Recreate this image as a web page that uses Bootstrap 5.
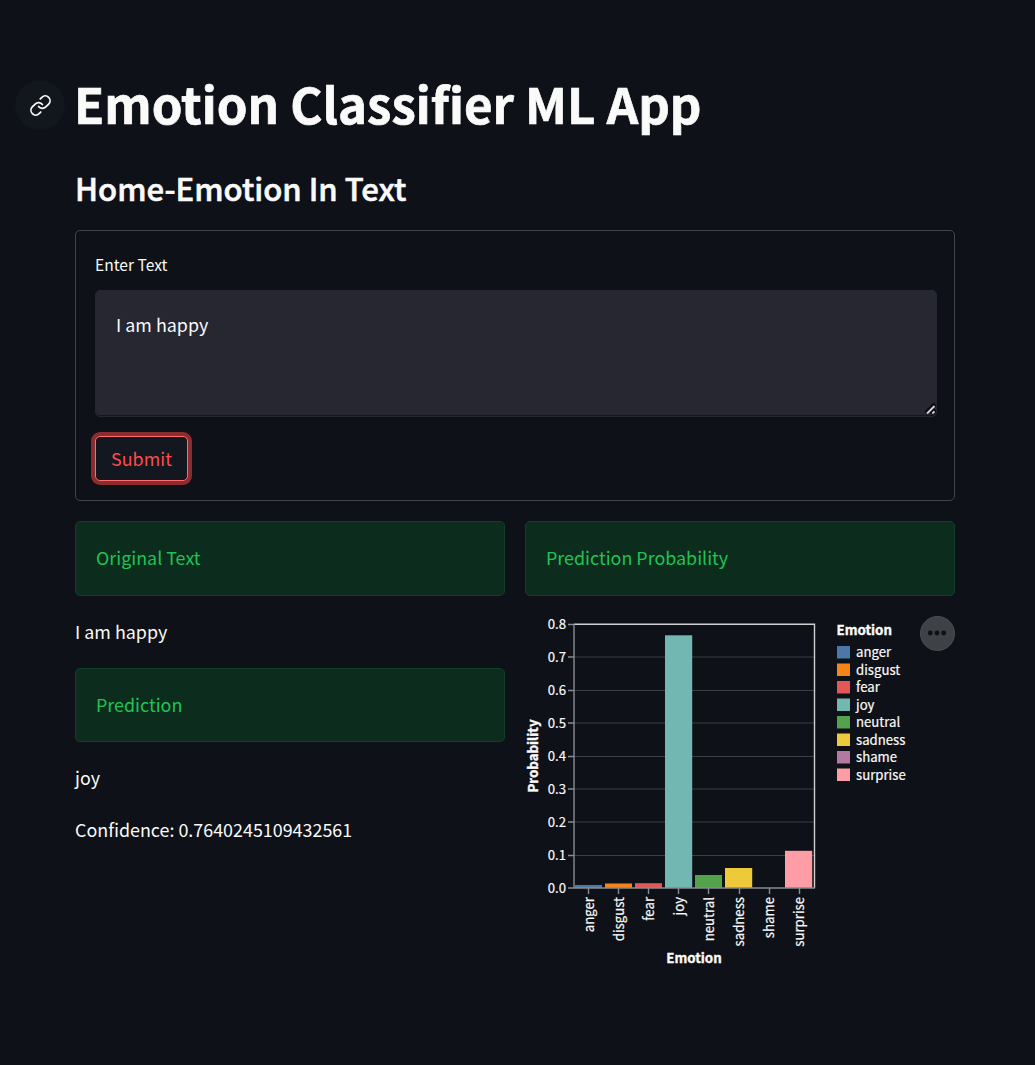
<!DOCTYPE html>
<html lang="en">
<head>
<meta charset="utf-8">
<meta name="viewport" content="width=device-width, initial-scale=1">
<title>Emotion Classifier ML App</title>
<link href="https://cdn.jsdelivr.net/npm/bootstrap@5.3.0/dist/css/bootstrap.min.css" rel="stylesheet">
<style>
  body { background: #0e1117; color: #fafafa; font-family: "Noto Sans CJK SC", "Noto Sans", sans-serif; font-size: 17.9px; line-height: 32px; height: 1065px; overflow: hidden; }
  .page { width: 880px; margin-left: 75px; padding-top: 72px; }
  .app-title { font-size: 49.2px; line-height: 66px; font-weight: 700; margin-left: -60px; gap: 9px; -webkit-text-stroke: .7px #fafafa; }
  .app-title span { margin-top: -4px; padding-bottom: 0; }
  .title-line { height: 66px; }
  .anchor-link { width: 50px; height: 50px; background: #12161d; }
  .app-sub { font-size: 31.1px; line-height: 42px; font-weight: 500; margin: 29px 0 21px; -webkit-text-stroke: .6px #fafafa; }
  .form-box { border: 1px solid #41444c; border-radius: 5px; height: 271px; padding: 19px 17px 0 19px; }
  .form-box label { font-size: 15.6px; line-height: 28px; margin-bottom: 12px; }
  .form-box textarea.form-control { height: 127px; resize: none; background: #262730; border: 1px solid #262730; border-radius: 5px; color: #fafafa; font-size: 17.9px; line-height: 28px; padding: 19px 20px; box-shadow: inset 0 -1px 0 #14161d; }
  .grip { right: 0; bottom: 2px; }
  .submit-btn { width: 93px; height: 45px; margin-top: 19px; padding: 0 0 2px; font-size: 17.9px; line-height: 32px; color: #ff4b4b; background: #131720; border: 1px solid #ff6c6c; border-radius: 5px; box-shadow: 0 0 0 4px #8b2c31; }
  .results { margin-top: 20px; gap: 20px; }
  .result-col { width: 430px; }
  .ok-box { height: 75px; margin: 0; padding: 19px 20px; border: 1px solid #123f27; border-radius: 5px; background: #0c2d1d; color: #21c354; }
  .ok-box.second { margin-top: 21px; height: 74px; }
  .written { margin: 19px 0 0; }
  .written + .written { margin-top: 20px; }
  .plot { overflow: visible; }
  .plot text { fill: #fafafa; font-size: 13.2px; stroke: #fafafa; stroke-width: .2px; }
  .plot .ttl { font-weight: 700; font-size: 13.3px; stroke-width: .35px; }
</style>
</head>
<body>
<main class="page">
  <h1 class="app-title title-line d-flex align-items-center mb-0">
    <a href="#" class="anchor-link rounded-circle d-flex align-items-center justify-content-center" aria-label="Link to heading">
      <svg width="23" height="23" viewBox="0 0 24 24" fill="none" stroke="#fafafa" stroke-width="1.8" stroke-linecap="round"><path d="M10 13a5 5 0 0 0 7.54.54l3-3a5 5 0 0 0-7.07-7.07l-1.72 1.71"/><path d="M14 11a5 5 0 0 0-7.54-.54l-3 3a5 5 0 0 0 7.07 7.07l1.71-1.71"/></svg>
    </a>
    <span>Emotion Classifier ML App</span>
  </h1>
  <h3 class="app-sub">Home-Emotion In Text</h3>

  <form class="form-box" onsubmit="return false">
    <label class="d-block" for="entry">Enter Text</label>
    <div class="position-relative">
      <textarea id="entry" class="form-control d-block">I am happy</textarea>
      <svg class="grip position-absolute" width="13" height="12" viewBox="0 0 13 12"><path d="M2 10 11 1M7 10.5l4-4" stroke="#08090c" stroke-width="4"/><path d="M3 10.500 10.500 3M8.300 10.500 10.500 8.300" stroke="#d5d5d8" stroke-width="1.8"/></svg>
    </div>
    <button class="btn submit-btn" type="submit">Submit</button>
  </form>

  <div class="results d-flex">
    <section class="result-col">
      <div class="alert ok-box">Original Text</div>
      <p class="written">I am happy</p>
      <div class="alert ok-box second">Prediction</div>
      <p class="written">joy</p>
      <p class="written">Confidence: 0.7640245109432561</p>
    </section>
    <section class="result-col">
      <div class="alert ok-box">Prediction Probability</div>
      <svg class="plot d-block" width="430" height="370" viewBox="525 596 430 370" role="img" aria-label="Probability by emotion">
        <path d="M574 657H814M574 690.500H814M574 723H814M574 756.500H814M574 789H814M574 822H814M574 855.500H814" stroke="#3b3e44" stroke-width="1.2"/>
        <path d="M574 624.300H814.500V888" fill="none" stroke="#cfd0d2" stroke-width="1.4"/>
        <rect x="575" y="885" width="27" height="3" fill="#4c78a8"/>
        <rect x="605" y="883.500" width="27" height="4.500" fill="#f58518"/>
        <rect x="635" y="883.200" width="27" height="4.800" fill="#e45756"/>
        <rect x="665" y="635.300" width="27.200" height="252.700" fill="#72b7b2"/>
        <rect x="695" y="875" width="27" height="13" fill="#54a24b"/>
        <rect x="725" y="868" width="27.200" height="20" fill="#eeca3b"/>
        <rect x="785" y="850.800" width="27.200" height="37.200" fill="#ff9da6"/>
        <path d="M574 624V888M568 888H815M568 624.500h6M568 657h6M568 690.500h6M568 723h6M568 756.500h6M568 789h6M568 822h6M568 855.500h6M588.500 888v6M618.500 888v6M648.500 888v6M678.500 888v6M708.500 888v6M739.500 888v6M769.500 888v6M799.500 888v6" fill="none" stroke="#888b90" stroke-width="1.4"/>
        <g text-anchor="end">
          <text x="566" y="629">0.8</text><text x="566" y="662">0.7</text><text x="566" y="695">0.6</text><text x="566" y="728">0.5</text><text x="566" y="761">0.4</text><text x="566" y="794">0.3</text><text x="566" y="827">0.2</text><text x="566" y="860">0.1</text><text x="566" y="893">0.0</text>
        </g>
        <g text-anchor="end">
          <text transform="translate(594 897) rotate(-90)">anger</text>
          <text transform="translate(624 897) rotate(-90)">disgust</text>
          <text transform="translate(654 897) rotate(-90)">fear</text>
          <text transform="translate(684 897) rotate(-90)">joy</text>
          <text transform="translate(714 897) rotate(-90)">neutral</text>
          <text transform="translate(744 897) rotate(-90)">sadness</text>
          <text transform="translate(774 897) rotate(-90)">shame</text>
          <text transform="translate(804 897) rotate(-90)">surprise</text>
        </g>
        <text class="ttl" x="694" y="963" text-anchor="middle">Emotion</text>
        <text class="ttl" transform="translate(538 756) rotate(-90)" text-anchor="middle">Probability</text>
        <text class="ttl" x="836.500" y="635">Emotion</text>
        <rect x="837" y="646" width="13" height="12.500" fill="#4c78a8"/><text x="856" y="657">anger</text>
        <rect x="837" y="663.500" width="13" height="12.500" fill="#f58518"/><text x="856" y="675">disgust</text>
        <rect x="837" y="681" width="13" height="12.500" fill="#e45756"/><text x="856" y="692">fear</text>
        <rect x="837" y="698.500" width="13" height="12.500" fill="#72b7b2"/><text x="856" y="710">joy</text>
        <rect x="837" y="716" width="13" height="12.500" fill="#54a24b"/><text x="856" y="727">neutral</text>
        <rect x="837" y="733.500" width="13" height="12.500" fill="#eeca3b"/><text x="856" y="745">sadness</text>
        <rect x="837" y="751" width="13" height="12.500" fill="#b279a2"/><text x="856" y="762">shame</text>
        <rect x="837" y="768.500" width="13" height="12.500" fill="#ff9da6"/><text x="856" y="780">surprise</text>
        <circle cx="937.500" cy="633.500" r="17" fill="#3e4146" stroke="#4b4e52" stroke-width="1"/>
        <g fill="#0e1117"><circle cx="930.300" cy="633" r="2.400"/><circle cx="937" cy="633" r="2.400"/><circle cx="943.700" cy="633" r="2.400"/></g>
      </svg>
    </section>
  </div>
</main>
<script src="https://cdn.jsdelivr.net/npm/bootstrap@5.3.0/dist/js/bootstrap.bundle.min.js"></script>
</body>
</html>
